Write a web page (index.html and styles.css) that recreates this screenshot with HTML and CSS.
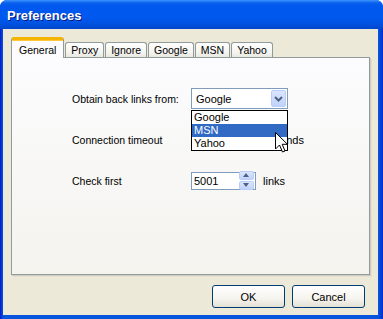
FILE: index.html
```html
<!DOCTYPE html>
<html>
<head>
    <meta charset="UTF-8">
    <title>Preferences</title>
    <link rel="stylesheet" href="styles.css">
</head>
<body>
    <div class="window">
        <div class="titlebar">
            <span class="title">Preferences</span>
        </div>
        <div class="client">
            <!-- tab strip -->
            <div class="tabs">
                <div class="tab active">General</div>
                <div class="tab">Proxy</div>
                <div class="tab">Ignore</div>
                <div class="tab">Google</div>
                <div class="tab">MSN</div>
                <div class="tab">Yahoo</div>
            </div>
            <div class="panel">
                <div class="form">
                    <label class="caption">Obtain back links from:</label>
                    <div class="combo">
                        <span class="combo-value">Google</span>
                        <span class="combo-btn">
                            <svg width="9" height="6" viewBox="0 0 9 6"><path d="M1 1 L4.5 4.5 L8 1" fill="none" stroke="#4d6185" stroke-width="2"/></svg>
                        </span>
                    </div>

                    <label class="caption">Connection timeout</label>
                    <!-- value hidden under the open list -->
                    <div class="spin">
                        <span class="spin-value"></span>
                        <span class="spin-btns"><span class="spin-up"></span><span class="spin-down"></span></span>
                    </div>
                    <span class="unit">seconds</span>

                    <label class="caption">Check first</label>
                    <div class="spin">
                        <span class="spin-value">5001</span>
                        <span class="spin-btns"><span class="spin-up"></span><span class="spin-down"></span></span>
                    </div>
                    <span class="unit">links</span>
                </div>
            </div>
            <div class="buttons">
                <button type="button" class="btn">OK</button>
                <button type="button" class="btn">Cancel</button>
            </div>
        </div>

        <!-- open drop-down of the combo box -->
        <div class="droplist">
            <div class="item">Google</div>
            <div class="item selected">MSN</div>
            <div class="item">Yahoo</div>
        </div>

        <svg class="cursor" width="14" height="22" viewBox="0 0 14 22">
            <path d="M0.5 0.5 V17 L4.5 13 L7.5 20 L10 19 L7.2 12.3 H12.5 Z" fill="#fff" stroke="#000" stroke-width="1"/>
        </svg>
    </div>
</body>
</html>
```

FILE: styles.css
```css
body {
    margin: 0;
    background-color: #ffffff;
}
.window {
    position: relative;
    width: 383px;
    height: 319px;
    box-sizing: border-box;
    display: flex;
    flex-direction: column;
    background: linear-gradient(to right, #0019cf 0px, #0855dd 3px, #0855dd 378px, #0030d0 383px);
    border-radius: 7px 7px 0 0;
    overflow: hidden;
    font-family: "Liberation Sans", Tahoma, sans-serif;
    font-size: 10.5px;
    color: #000000;
}
.titlebar {
    height: 29px;
    flex: none;
    display: flex;
    align-items: center;
    padding: 2px 0 0 7px;
    box-sizing: border-box;
    background: linear-gradient(to bottom, #3d95ff 0px, #0a5fec 3px, #0058ee 6px, #0058ee 18px, #0052e0 24px, #0046c8 29px);
}
.title {
    color: #ffffff;
    font-family: "Liberation Sans", sans-serif;
    font-weight: bold;
    font-size: 13px;
    text-shadow: 1px 1px 0 #0a1883;
}
.client {
    flex: 1;
    margin: 0 5px 4px 3px;
    padding: 8px 8px 0 8px;
    background-color: #ece9d8;
    display: flex;
    flex-direction: column;
}
.tabs {
    display: flex;
    align-items: flex-end;
    height: 20px;
    position: relative;
    z-index: 1;
}
.tab {
    height: 15px;
    box-sizing: border-box;
    padding: 1px 5px 0 5px;
    margin-right: 1px;
    border: 1px solid #919b9c;
    border-bottom: none;
    border-radius: 3px 3px 0 0;
    background: linear-gradient(to bottom, #ffffff, #f3f3ef 70%, #e9e8e0);
    line-height: 13px;
}
.tab.active {
    height: 21px;
    margin-bottom: -1px;
    padding: 4px 7px 0 7px;
    border-top: 3px solid #f5b400;
    background: #fcfcfe;
    box-shadow: inset 0 1px 0 #ffc83c;
}
.panel {
    height: 218px;
    box-sizing: border-box;
    border: 1px solid #919b9c;
    background: linear-gradient(to bottom, #fcfcfe, #f4f3ee);
    box-shadow: 1px 1px 0 #d0cdbf, 2px 2px 0 #e3e0d0;
    padding: 30px 0 0 60px;
}
.form {
    display: grid;
    grid-template-columns: 119px 65px auto;
    grid-auto-rows: 21px;
    row-gap: 20px;
    align-items: center;
}
.caption {
    grid-column: 1;
}
.combo {
    grid-column: 2 / span 2;
    width: 97px;
    height: 21px;
    box-sizing: border-box;
    border: 1px solid #7f9db9;
    background: #ffffff;
    display: flex;
    align-items: center;
    justify-content: space-between;
    padding: 1px;
}
.combo-value {
    padding-left: 3px;
    font-size: 11px;
}
.combo-btn {
    width: 15px;
    height: 17px;
    box-sizing: border-box;
    border: 1px solid #b9cdf8;
    border-radius: 2px;
    background: linear-gradient(to bottom, #dbe6fd, #c1d3fb);
    display: flex;
    align-items: center;
    justify-content: center;
}
.spin {
    width: 65px;
    height: 18px;
    box-sizing: border-box;
    border: 1px solid #7f9db9;
    background: #ffffff;
    display: flex;
    align-items: center;
    justify-content: space-between;
    padding: 0 1px 0 0;
}
.spin-value {
    padding-left: 2px;
    font-size: 11px;
}
.spin-btns {
    display: flex;
    flex-direction: column;
    gap: 1px;
    width: 15px;
}
.spin-up, .spin-down {
    height: 7px;
    border: 1px solid #b9cdf8;
    border-radius: 2px;
    background: linear-gradient(to bottom, #dbe6fd, #c1d3fb);
    position: relative;
}
.spin-up::after, .spin-down::after {
    content: "";
    position: absolute;
    left: 3px;
    top: 1px;
    border-left: 3.5px solid transparent;
    border-right: 3.5px solid transparent;
}
.spin-up::after {
    border-bottom: 4px solid #4d6185;
}
.spin-down::after {
    border-top: 4px solid #4d6185;
}
.unit {
    margin-left: 7px;
    font-size: 11px;
}
.buttons {
    display: flex;
    justify-content: flex-end;
    gap: 7px;
    padding: 10px 5px 0 0;
}
.btn {
    width: 73px;
    height: 23px;
    border: 1px solid #003c74;
    border-radius: 3px;
    background: linear-gradient(to bottom, #ffffff, #f5f4ee 60%, #e3e0d4);
    font-family: "Liberation Sans", Tahoma, sans-serif;
    font-size: 11px;
    color: #000000;
    padding: 0;
}
.droplist {
    position: absolute;
    left: 191px;
    top: 110px;
    width: 97px;
    box-sizing: border-box;
    border: 1px solid #000000;
    background: #ffffff;
    z-index: 2;
    font-size: 11px;
}
.item {
    height: 13px;
    line-height: 13px;
    padding-left: 2px;
}
.item.selected {
    background: #316ac5;
    color: #ffffff;
}
.cursor {
    position: absolute;
    left: 275px;
    top: 132px;
    z-index: 3;
}
```
